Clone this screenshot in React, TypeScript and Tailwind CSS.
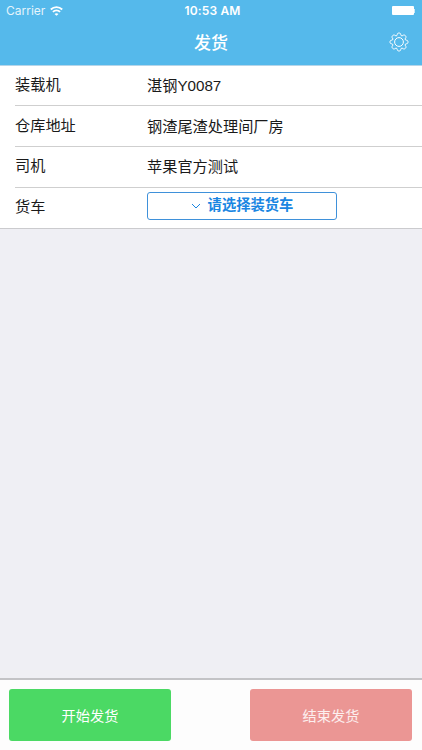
import React from "react";

type Row = { label: string; value?: string };

const rows: Row[] = [
  { label: "装载机", value: "湛钢Y0087" },
  { label: "仓库地址", value: "钢渣尾渣处理间厂房" },
  { label: "司机", value: "苹果官方测试" },
  { label: "货车" },
];

function WifiIcon() {
  return (
    <svg className="ml-[5px] h-[10px] w-[13px]" viewBox="0 0 13 10" fill="none" stroke="white" strokeWidth="1.8">
      <path d="M0.8 3.5C4 0.2 9 0.2 12.2 3.5" />
      <path d="M2.9 5.9C5 3.9 8 3.9 10.1 5.9" />
      <path d="M6.5 9.8L4.5 7.9C5.7 6.9 7.3 6.9 8.5 7.9Z" fill="white" stroke="none" />
    </svg>
  );
}

function gearOutline(teeth: number): string {
  const point = (radius: number, degrees: number) => {
    const a = (degrees * Math.PI) / 180;
    return `${(10 + radius * Math.sin(a)).toFixed(2)} ${(10 - radius * Math.cos(a)).toFixed(2)}`;
  };
  const step = 360 / teeth;
  let d = `M${point(6.6, -step / 2)}`;
  for (let i = 0; i < teeth; i++) {
    const c = i * step;
    d += `L${point(7.5, c - 14)}C${point(9.8, c - 12)} ${point(9.8, c + 12)} ${point(7.5, c + 14)}L${point(6.6, c + step / 2)}`;
  }
  return d + "Z";
}

function GearIcon() {
  return (
    <svg className="h-5 w-5" viewBox="0 0 20 20" fill="none" stroke="white" strokeWidth="1" strokeLinejoin="round">
      <path d={gearOutline(8)} />
      <circle cx="10" cy="10" r="4.4" />
    </svg>
  );
}

function StatusBar() {
  return (
    <div className="grid h-[22px] grid-cols-3 items-center text-white">
      <div className="flex items-center pl-[6px] text-[12px]">
        <span className="opacity-85">Carrier</span>
        <WifiIcon />
      </div>
      <div className="pl-[3px] text-center text-[12px] font-semibold tracking-[0.15px]">10:53 AM</div>
      <div className="flex items-center justify-end pb-px pr-[7px]">
        <span className="h-[9px] w-[22px] rounded-[1px] bg-white" />
        <span className="h-[4px] w-px bg-white/70" />
      </div>
    </div>
  );
}

export default function App() {
  return (
    <div className="flex h-[750px] w-full flex-col overflow-hidden bg-[#efeff4] font-[Inter,'Noto_Sans_CJK_SC',sans-serif] text-[#1a1a1a]">
      <header className="h-[66px] shrink-0 border-b border-[#b5d5e9] bg-[#55b9eb]">
        <StatusBar />
        <div className="grid h-[42px] grid-cols-[1fr_auto_1fr] items-center text-white">
          <span />
          <h1 className="text-[17px] font-medium leading-6">发货</h1>
          <button className="mb-[2px] mr-[13px] justify-self-end" aria-label="设置">
            <GearIcon />
          </button>
        </div>
      </header>

      <main className="min-h-0 flex-1">
        <div className="border-b border-[#cbcbce] bg-white font-['Liberation_Sans','Noto_Sans_CJK_SC',sans-serif]">
          {rows.map((row, i) => (
            <div
              key={row.label}
              className={`ml-[15px] flex text-[15.2px] leading-[22px] ${i === 0 ? "h-10 border-b border-[#cfcfcf]" : i < 3 ? "h-[41px] border-b border-[#cfcfcf]" : "h-10"}`}
            >
              <div className={i === 1 ? "w-[132px] pt-[9px]" : "w-[132px] pt-[8px]"}>{row.label}</div>
              {row.value ? (
                <div className={i === 1 ? "pt-[10px]" : "pt-[9px]"}>{row.value}</div>
              ) : (
                <button className="mt-[4px] flex h-[28px] w-[190px] items-center justify-center rounded-[3px] border border-[#3f91da] pb-[3px] text-[14.3px] font-bold text-[#1a86e2]">
                  <svg className="mr-[7px] mt-[3px] h-[6px] w-[10px]" viewBox="0 0 10 6" fill="none" stroke="currentColor">
                    <path d="M1 1L5 5L9 1" />
                  </svg>
                  请选择装货车
                </button>
              )}
            </div>
          ))}
        </div>
      </main>

      <footer className="flex h-[72px] shrink-0 justify-between border-t-2 border-[#c3c3c6] bg-[#fdfdfd] pl-[9px] pr-[10px] pt-[9px] text-[14.2px] text-white">
        <button className="h-[52px] w-[162px] rounded-[3px] bg-[#4bd964] pt-px">开始发货</button>
        <button className="h-[52px] w-[162px] rounded-[3px] bg-[#eb9694] pt-px text-white/85">结束发货</button>
      </footer>
    </div>
  );
}
